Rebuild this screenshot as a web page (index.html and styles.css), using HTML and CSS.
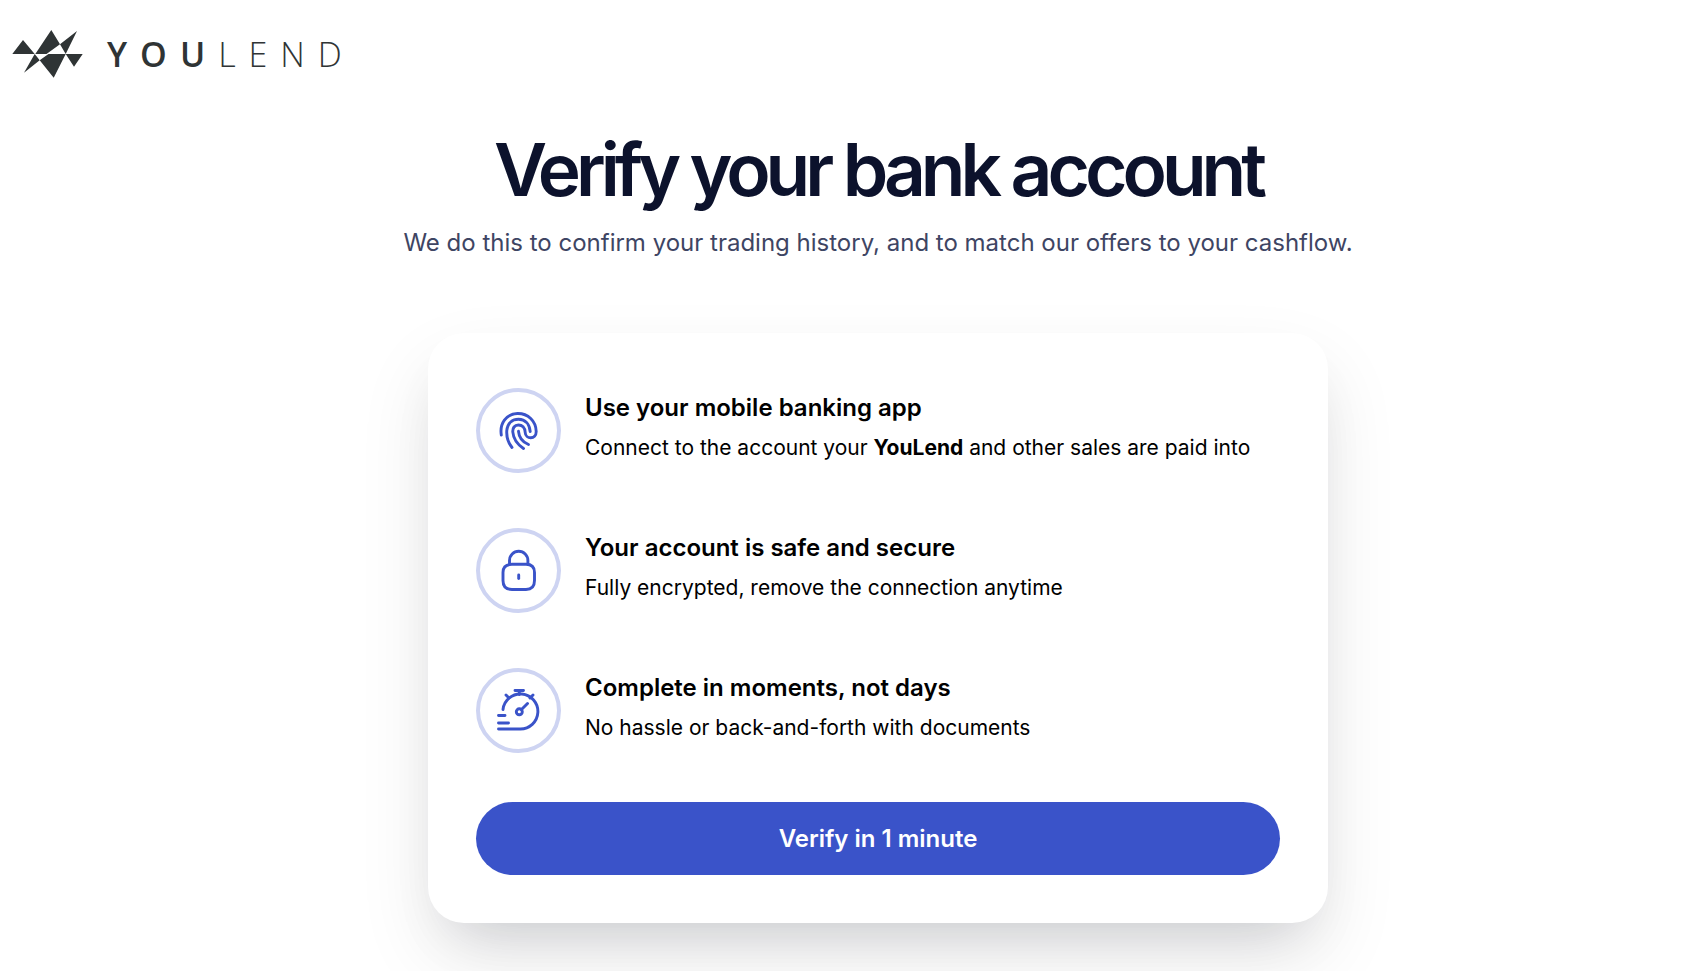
FILE: index.html
```html
<!DOCTYPE html>
<html lang="en">
<head>
    <meta charset="UTF-8">
    <meta name="viewport" content="width=device-width, initial-scale=1.0">
    <title>Verify your bank account</title>
    <link rel="stylesheet" href="styles.css">
</head>
<body>
    <header class="header">
        <svg class="logo-mark" viewBox="0 0 72 50" aria-hidden="true">
            <path d="M0.300 25 11 11 22.700 25ZM23.300 25 39.300 1 48 15.300 34.500 25ZM48 15.300 65 2 53.700 25ZM53.700 25H70.700L62 37.700ZM53.700 25 41.700 48.700 27.700 31.300 36.500 25ZM22.700 25 27.700 31.300 12 43.700Z"/>
        </svg>
        <div class="logo-text"><b>YOU</b>LEND</div>
    </header>

    <main class="main">
        <h1>Verify your bank account</h1>
        <p class="subtitle">We do this to confirm your trading history, and to match our offers to your cashflow.</p>

        <section class="card">
            <ul class="steps">
                <li class="step">
                    <div class="step-icon">
                        <svg viewBox="0 0 44 44" aria-hidden="true">
                            <path d="M4.300 26C2.500 14.500 9 4.800 20.500 4.500 31 4.300 39 12 39.200 22.500 39.200 31 28.500 30.500 28.200 23.500 28 18.500 25 16 21.500 16 17.500 16 15.500 19 15.800 23 16.400 30 20.500 35.500 26.500 39.500"/>
                            <path d="M15 38.500C10.500 33 9.400 27 9.800 21.500 10.500 14 15.500 10.200 21.500 10.200 28.500 10.300 32.500 15.500 33.200 22.500"/>
                            <path d="M21.500 22.300C22 28.500 25.500 33 31.500 35.500"/>
                        </svg>
                    </div>
                    <div class="step-text">
                        <h2>Use your mobile banking app</h2>
                        <p>Connect to the account your <b>YouLend</b> and other sales are paid into</p>
                    </div>
                </li>
                <li class="step">
                    <div class="step-icon">
                        <svg viewBox="0 0 44 44" aria-hidden="true">
                            <path d="M12.500 15V11.500a9.200 9.200 0 0 1 18.400 0V15"/>
                            <path d="M15 15.300H29Q37.500 15.300 37.500 23.500V31.500Q37.500 40.500 29 40.500H15Q6 40.500 6 31.500V23.500Q6 15.300 15 15.300Z"/>
                            <path d="M21.700 26v3.500"/>
                        </svg>
                    </div>
                    <div class="step-text">
                        <h2>Your account is safe and secure</h2>
                        <p>Fully encrypted, remove the connection anytime</p>
                    </div>
                </li>
                <li class="step">
                    <div class="step-icon">
                        <svg viewBox="0 0 44 44" aria-hidden="true">
                            <path d="M6 20.500A17.500 17.500 0 1 1 23 40H1.500"/>
                            <path d="M18 1.500h8.500M22.300 1.500v4M9 6l3 3M36 6l-3 3M1.500 26.500h6.500M1.500 34h10M24.500 20.500l6-6"/>
                            <circle cx="22.300" cy="22.800" r="3"/>
                        </svg>
                    </div>
                    <div class="step-text">
                        <h2>Complete in moments, not days</h2>
                        <p>No hassle or back-and-forth with documents</p>
                    </div>
                </li>
            </ul>
            <button class="verify-btn" type="button">Verify in 1 minute</button>
        </section>
    </main>
</body>
</html>
```
FILE: styles.css
```css
* { box-sizing: border-box; }
body { font-family: Inter, "Liberation Sans", sans-serif; background: #fff; color: #000; margin: 0; }
h1, h2, p, ul { margin: 0; padding: 0; }

.header { display: flex; align-items: center; gap: 23px; padding: 29px 12px 0; }
.logo-mark { width: 72px; height: 50px; fill: #2f3435; }
.logo-text { font-family: "Open Sans", sans-serif; font-size: 34px; line-height: 48px; font-weight: 300; letter-spacing: 13px; color: #2f3435; }
.logo-text b { font-weight: 600; }

.main { padding: 51px 0 48px 56px; text-align: center; }
h1 { font-size: 73px; line-height: 80px; font-weight: 600; letter-spacing: -5px; color: #0c122c; }
.subtitle { margin-top: 15px; font-size: 24px; line-height: 36px; color: #3e4563; }

.card { max-width: 900px; margin: 72px auto 0; padding: 55px 48px 48px; background: #fff; border-radius: 36px; box-shadow: 0 34px 76px rgba(0, 0, 0, 0.09), 0 30px 60px -30px rgba(12, 18, 44, 0.18); text-align: left; }
.steps { display: flex; flex-direction: column; gap: 55px; list-style: none; }
.step { display: flex; gap: 24px; }
.step-icon { display: flex; flex: none; align-items: center; justify-content: center; width: 85px; height: 85px; border: 4px solid #ced4f2; border-radius: 50%; }
.step-icon svg { width: 44px; height: 44px; fill: none; stroke: #3a53c9; stroke-width: 2.900; stroke-linecap: round; stroke-linejoin: round; }
.step-text h2 { font-size: 24px; line-height: 40px; font-weight: 600; }
.step-text p { font-size: 21px; line-height: 40px; }
.verify-btn { display: block; width: 100%; height: 73px; margin-top: 49px; border: none; border-radius: 37px; background: #3a53c9; color: #fff; font-family: inherit; font-size: 24px; font-weight: 600; cursor: pointer; }
.verify-btn:hover { background: #3047b5; }
```
